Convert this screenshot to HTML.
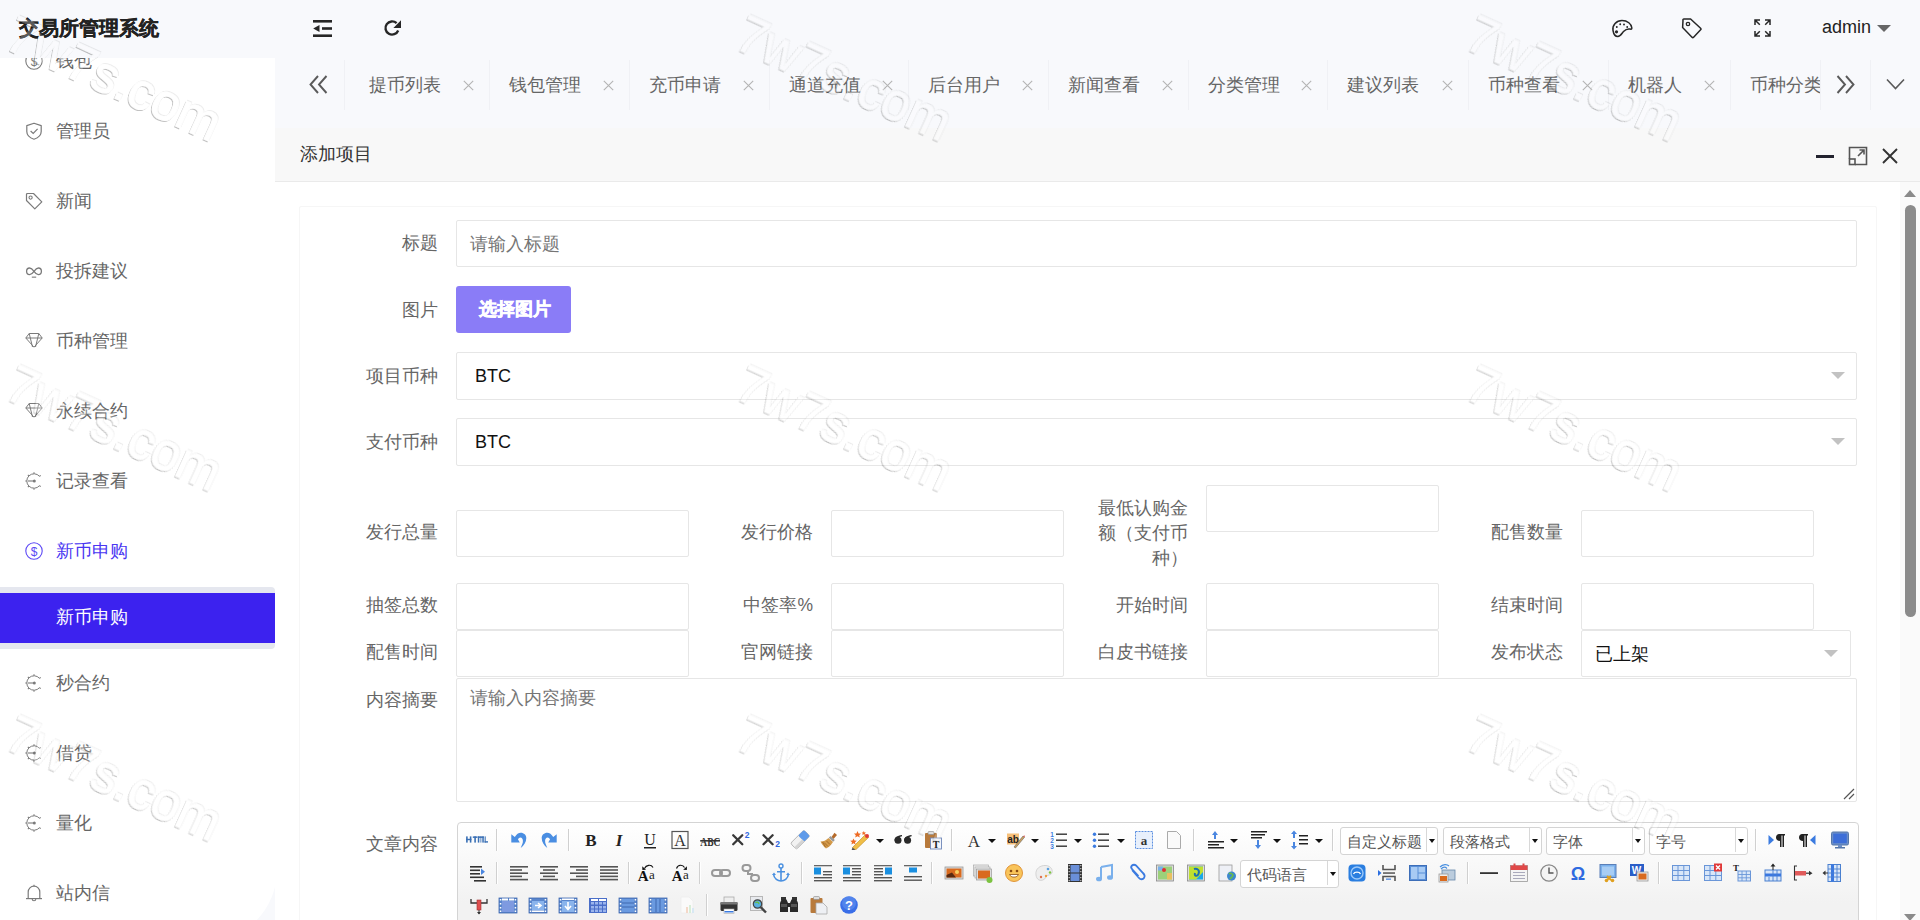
<!DOCTYPE html>
<html><head><meta charset="utf-8">
<style>
*{box-sizing:border-box;margin:0;padding:0}
html,body{width:1920px;height:920px;overflow:hidden;background:#fff;font-family:"Liberation Sans",sans-serif;color:#333}
.a{position:absolute}
#hdr{left:0;top:0;width:1920px;height:58px;background:#f8f9fc}
#logo{left:19px;top:14px;font-size:20px;font-weight:bold;color:#222;-webkit-text-stroke:0.3px #222;line-height:28px;white-space:nowrap}
#side{left:0;top:58px;width:275px;height:862px;background:#fff;overflow:hidden}
.mt{left:56px;font-size:17.5px;color:#666;line-height:28px;white-space:nowrap}
.mi{position:absolute;left:0;width:275px;height:40px;font-size:17.5px;color:#666;line-height:40px}
.mi span{position:absolute;left:57px;top:0;white-space:nowrap}
.mi svg{position:absolute;left:25px;top:11px}
#tabs{left:275px;top:58px;width:1645px;height:70px;background:#f8f9fc}
.tab{position:absolute;top:3px;height:50px;font-size:17.5px;color:#666;line-height:50px;white-space:nowrap}
.sep{position:absolute;top:3px;width:1px;height:50px;background:#eceef3}
#mhdr{left:275px;top:128px;width:1645px;height:54px;background:#f8f8f8;border-bottom:1px solid #eaeaea}
#mtitle{left:300px;top:140px;font-size:17.5px;color:#333;line-height:28px}
#content{left:275px;top:182px;width:1645px;height:738px;background:#fff}
#card{left:299px;top:206px;width:1578px;height:760px;border:1px solid #f6f6f6;border-radius:2px}
#sb{left:1900px;top:182px;width:20px;height:738px;background:#fafafa}
.lbl{position:absolute;font-size:17.5px;color:#666;line-height:25px;text-align:right;white-space:nowrap}
.inp{position:absolute;border:1px solid #e6e6e6;border-radius:2px;background:#fff}
.ph{position:absolute;font-size:17.5px;color:#757575;line-height:25px;white-space:nowrap}
.tabt{font-size:17.5px;color:#666;line-height:25px;white-space:nowrap}
.wm{position:absolute;font-family:"Liberation Sans",sans-serif;font-size:48px;font-weight:bold;line-height:54px;color:#fff;transform-origin:0 0;transform:rotate(25deg);white-space:nowrap;text-shadow:-1px 1px 1.5px rgba(0,0,0,.5);opacity:.45;pointer-events:none}
.caret{position:absolute;width:0;height:0;border-left:7px solid transparent;border-right:7px solid transparent;border-top:7px solid #c2c2c2}
</style></head><body>
<div id="side" class="a"></div>
<svg class="a" style="left:25px;top:52px" width="18" height="18" viewBox="0 0 18 18"><circle cx="9" cy="9" r="8.2" fill="none" stroke="#7a7a7a" stroke-width="1.1"/><text x="9" y="13.5" font-size="12" text-anchor="middle" fill="#7a7a7a" font-family="Liberation Sans">$</text></svg>
<div class="mt a" style="top:47px;">钱包</div>
<svg class="a" style="left:25px;top:122px" width="18" height="18" viewBox="0 0 18 18"><path d="M9 1.2 L16.2 3.6 V9.5 C16.2 13.6 12.8 16 9 17.2 C5.2 16 1.8 13.6 1.8 9.5 V3.6 Z" fill="none" stroke="#7a7a7a" stroke-width="1.2" stroke-linejoin="round"/><path d="M5.6 9 L8.2 11.4 L12.6 6.8" fill="none" stroke="#7a7a7a" stroke-width="1.2"/></svg>
<div class="mt a" style="top:117px;">管理员</div>
<svg class="a" style="left:25px;top:192px" width="18" height="18" viewBox="0 0 18 18"><path d="M1.5 2.5 Q1.5 1.5 2.5 1.5 H8.5 L16.8 9.8 L9.8 16.8 L1.5 8.5 Z" fill="none" stroke="#7a7a7a" stroke-width="1.2" stroke-linejoin="round"/><circle cx="5.6" cy="5.6" r="1.6" fill="none" stroke="#7a7a7a" stroke-width="1.1"/></svg>
<div class="mt a" style="top:187px;">新闻</div>
<svg class="a" style="left:25px;top:262px" width="18" height="18" viewBox="0 0 18 18"><path d="M9 9.3 C7.6 7.3 6.3 6 4.6 6 C2.9 6 1.6 7.4 1.6 9.3 C1.6 11.2 2.9 12.6 4.6 12.6 C6.3 12.6 7.6 11.3 9 9.3 C10.4 7.3 11.7 6 13.4 6 C15.1 6 16.4 7.4 16.4 9.3 C16.4 11.2 15.1 12.6 13.4 12.6 C11.7 12.6 10.4 11.3 9 9.3 Z" fill="none" stroke="#7a7a7a" stroke-width="1.3"/><rect x="6.8" y="14.6" width="4.4" height="1.1" fill="#7a7a7a"/></svg>
<div class="mt a" style="top:257px;">投拆建议</div>
<svg class="a" style="left:25px;top:332px" width="18" height="18" viewBox="0 0 18 18"><path d="M4.2 1.5 H13.8 L17.2 6 L9 15.2 L0.8 6 Z M0.8 6 H17.2 M4.2 1.5 L7.5 15 M13.8 1.5 L10.5 15" fill="none" stroke="#7a7a7a" stroke-width="1" stroke-linejoin="round"/></svg>
<div class="mt a" style="top:327px;">币种管理</div>
<svg class="a" style="left:25px;top:402px" width="18" height="18" viewBox="0 0 18 18"><path d="M4.2 1.5 H13.8 L17.2 6 L9 15.2 L0.8 6 Z M0.8 6 H17.2 M4.2 1.5 L7.5 15 M13.8 1.5 L10.5 15" fill="none" stroke="#7a7a7a" stroke-width="1" stroke-linejoin="round"/></svg>
<div class="mt a" style="top:397px;">永续合约</div>
<svg class="a" style="left:25px;top:472px" width="18" height="18" viewBox="0 0 18 18"><path d="M14.52 4.37 A7.2 7.2 0 1 0 14.52 13.63" fill="none" stroke="#7a7a7a" stroke-width="1"/><path d="M14.52 4.37 L15.66 3.41 M9.00 1.80 L9.00 0.30 M3.91 3.91 L2.85 2.85 M1.80 9.00 L0.30 9.00 M3.91 14.09 L2.85 15.15 M9.00 16.20 L9.00 17.70 M14.52 13.63 L15.66 14.59 " stroke="#7a7a7a" stroke-width="1.1"/><line x1="3" y1="9" x2="8.5" y2="9" stroke="#7a7a7a" stroke-width="1.1"/><circle cx="9.3" cy="9" r="1.5" fill="#7a7a7a"/></svg>
<div class="mt a" style="top:467px;">记录查看</div>
<svg class="a" style="left:25px;top:542px" width="18" height="18" viewBox="0 0 18 18"><circle cx="9" cy="9" r="8.2" fill="none" stroke="#5b47f5" stroke-width="1.1"/><text x="9" y="13.5" font-size="12" text-anchor="middle" fill="#5b47f5" font-family="Liberation Sans">$</text></svg>
<div class="mt a" style="top:537px;color:#4a36f2;">新币申购</div>
<svg class="a" style="left:25px;top:674px" width="18" height="18" viewBox="0 0 18 18"><path d="M14.52 4.37 A7.2 7.2 0 1 0 14.52 13.63" fill="none" stroke="#7a7a7a" stroke-width="1"/><path d="M14.52 4.37 L15.66 3.41 M9.00 1.80 L9.00 0.30 M3.91 3.91 L2.85 2.85 M1.80 9.00 L0.30 9.00 M3.91 14.09 L2.85 15.15 M9.00 16.20 L9.00 17.70 M14.52 13.63 L15.66 14.59 " stroke="#7a7a7a" stroke-width="1.1"/><line x1="3" y1="9" x2="8.5" y2="9" stroke="#7a7a7a" stroke-width="1.1"/><circle cx="9.3" cy="9" r="1.5" fill="#7a7a7a"/></svg>
<div class="mt a" style="top:669px;">秒合约</div>
<svg class="a" style="left:25px;top:744px" width="18" height="18" viewBox="0 0 18 18"><path d="M14.52 4.37 A7.2 7.2 0 1 0 14.52 13.63" fill="none" stroke="#7a7a7a" stroke-width="1"/><path d="M14.52 4.37 L15.66 3.41 M9.00 1.80 L9.00 0.30 M3.91 3.91 L2.85 2.85 M1.80 9.00 L0.30 9.00 M3.91 14.09 L2.85 15.15 M9.00 16.20 L9.00 17.70 M14.52 13.63 L15.66 14.59 " stroke="#7a7a7a" stroke-width="1.1"/><line x1="3" y1="9" x2="8.5" y2="9" stroke="#7a7a7a" stroke-width="1.1"/><circle cx="9.3" cy="9" r="1.5" fill="#7a7a7a"/></svg>
<div class="mt a" style="top:739px;">借贷</div>
<svg class="a" style="left:25px;top:814px" width="18" height="18" viewBox="0 0 18 18"><path d="M14.52 4.37 A7.2 7.2 0 1 0 14.52 13.63" fill="none" stroke="#7a7a7a" stroke-width="1"/><path d="M14.52 4.37 L15.66 3.41 M9.00 1.80 L9.00 0.30 M3.91 3.91 L2.85 2.85 M1.80 9.00 L0.30 9.00 M3.91 14.09 L2.85 15.15 M9.00 16.20 L9.00 17.70 M14.52 13.63 L15.66 14.59 " stroke="#7a7a7a" stroke-width="1.1"/><line x1="3" y1="9" x2="8.5" y2="9" stroke="#7a7a7a" stroke-width="1.1"/><circle cx="9.3" cy="9" r="1.5" fill="#7a7a7a"/></svg>
<div class="mt a" style="top:809px;">量化</div>
<svg class="a" style="left:25px;top:884px" width="18" height="18" viewBox="0 0 18 18"><path d="M3.2 14.2 V8 C3.2 4.6 5.8 2.2 9 2.2 C12.2 2.2 14.8 4.6 14.8 8 V14.2" fill="none" stroke="#7a7a7a" stroke-width="1.2"/><line x1="1" y1="14.6" x2="17" y2="14.6" stroke="#7a7a7a" stroke-width="1.2"/><path d="M7.2 15 A1.8 1.8 0 0 0 10.8 15" fill="none" stroke="#7a7a7a" stroke-width="1.1"/><line x1="9" y1="0.8" x2="9" y2="2.2" stroke="#7a7a7a" stroke-width="1.1"/></svg>
<div class="mt a" style="top:879px;">站内信</div>
<div class="a" style="left:0;top:587px;width:275px;height:62px;background:#e5e7ef;border-radius:0 4px 4px 0"></div>
<div class="a" style="left:0;top:593px;width:275px;height:50px;background:#3c22ef"></div>
<div class="mt a" style="top:603px;color:#fff">新币申购</div>
<div id="sbcorner" class="a" style="left:235px;top:870px;width:40px;height:50px;overflow:hidden;background:#f8f9fc"><div style="position:absolute;left:-102px;top:-72px;width:144px;height:144px;border-radius:50%;background:#fff"></div></div>
<div id="hdr" class="a"></div>
<div id="logo" class="a">交易所管理系统</div>
<div id="tabs" class="a"></div>
<div id="mhdr" class="a"></div>
<div id="mtitle" class="a">添加项目</div>
<div id="content" class="a"></div>
<div id="card" class="a"></div>
<div id="sb" class="a"></div>
<!--FORM-->
<div class="lbl" style="right:1482.0px;top:231.0px">标题</div>
<div class="inp" style="left:456.0px;top:220.0px;width:1401.0px;height:47.0px"></div>
<div class="ph" style="left:470px;top:232px">请输入标题</div>
<div class="lbl" style="right:1482.0px;top:298.0px">图片</div>
<div class="a" style="left:456px;top:286px;width:115px;height:47px;background:#8a7cf7;border-radius:3px"></div>
<div class="a" style="left:479px;top:297px;font-size:17.5px;line-height:25px;color:#fff;font-weight:bold;-webkit-text-stroke:0.6px #fff">选择图片</div>
<div class="lbl" style="right:1482.0px;top:364.0px">项目币种</div>
<div class="inp" style="left:456.0px;top:352.0px;width:1401.0px;height:48.0px"></div>
<div class="a" style="left:475px;top:364px;font-size:18px;line-height:25px;color:#111">BTC</div>
<div class="caret" style="left:1831.0px;top:372.0px"></div>
<div class="lbl" style="right:1482.0px;top:430.0px">支付币种</div>
<div class="inp" style="left:456.0px;top:418.0px;width:1401.0px;height:48.0px"></div>
<div class="a" style="left:475px;top:430px;font-size:18px;line-height:25px;color:#111">BTC</div>
<div class="caret" style="left:1831.0px;top:438.0px"></div>
<div class="lbl" style="right:1482.0px;top:520.0px">发行总量</div>
<div class="inp" style="left:456.0px;top:510.0px;width:233.0px;height:47.0px"></div>
<div class="lbl" style="right:1107.0px;top:520.0px">发行价格</div>
<div class="inp" style="left:831.0px;top:510.0px;width:233.0px;height:47.0px"></div>
<div class="lbl" style="right:732px;top:496px;line-height:25px">最低认购金<br>额（支付币<br>种）</div>
<div class="inp" style="left:1206.0px;top:485.0px;width:233.0px;height:47.0px"></div>
<div class="lbl" style="right:357.0px;top:520.0px">配售数量</div>
<div class="inp" style="left:1581.0px;top:510.0px;width:233.0px;height:47.0px"></div>
<div class="lbl" style="right:1482.0px;top:593.0px">抽签总数</div>
<div class="inp" style="left:456.0px;top:582.5px;width:233.0px;height:47.0px"></div>
<div class="lbl" style="right:1107.0px;top:593.0px">中签率%</div>
<div class="inp" style="left:831.0px;top:582.5px;width:233.0px;height:47.0px"></div>
<div class="lbl" style="right:732.0px;top:593.0px">开始时间</div>
<div class="inp" style="left:1206.0px;top:582.5px;width:233.0px;height:47.0px"></div>
<div class="lbl" style="right:357.0px;top:593.0px">结束时间</div>
<div class="inp" style="left:1581.0px;top:582.5px;width:233.0px;height:47.0px"></div>
<div class="lbl" style="right:1482.0px;top:640.0px">配售时间</div>
<div class="inp" style="left:456.0px;top:630.0px;width:233.0px;height:47.0px"></div>
<div class="lbl" style="right:1107.0px;top:640.0px">官网链接</div>
<div class="inp" style="left:831.0px;top:630.0px;width:233.0px;height:47.0px"></div>
<div class="lbl" style="right:732.0px;top:640.0px">白皮书链接</div>
<div class="inp" style="left:1206.0px;top:630.0px;width:233.0px;height:47.0px"></div>
<div class="lbl" style="right:357.0px;top:640.0px">发布状态</div>
<div class="inp" style="left:1581.0px;top:630.0px;width:270.0px;height:47.0px"></div>
<div class="a" style="left:1595px;top:642px;font-size:17.5px;line-height:25px;color:#111">已上架</div>
<div class="caret" style="left:1824.0px;top:650.0px"></div>
<div class="lbl" style="right:1482.0px;top:688.0px">内容摘要</div>
<div class="inp" style="left:456.0px;top:677.5px;width:1401.0px;height:124.0px"></div>
<div class="ph" style="left:470px;top:686px">请输入内容摘要</div>
<svg class="a" style="left:1843px;top:788px" width="12" height="12" viewBox="0 0 12 12"><path d="M1 11 L11 1 M6 11 L11 6" stroke="#555" stroke-width="1.2"/></svg>
<div class="lbl" style="right:1482.0px;top:831.5px">文章内容</div>
<!--/FORM-->
<!--TB-->
<div class="a" style="left:456.5px;top:821.5px;width:1402px;height:120px;border:1px solid #d4d4d4;border-radius:4px;background:linear-gradient(#fff,#f2f2f2 80px)"></div>
<svg class="a" style="left:466.0px;top:830.3px" width="22" height="20" viewBox="0 0 22 20"><g fill="#3a70b5"><rect x="0.1" y="6.4" width="1.6" height="6.2"/><rect x="3.8" y="6.4" width="1.6" height="6.2"/><rect x="0.1" y="8.8" width="5.3" height="1.4"/><rect x="6.8" y="6.4" width="4.6" height="1.5"/><rect x="8.3" y="6.4" width="1.6" height="6.2"/><rect x="11.8" y="6.4" width="6" height="1.5"/><rect x="11.8" y="6.4" width="1.5" height="6.2"/><rect x="14.1" y="6.4" width="1.4" height="6.2" opacity=".6"/><rect x="16.3" y="6.4" width="1.5" height="6.2"/><rect x="18.5" y="6.4" width="1.5" height="6.2" opacity=".7"/><rect x="18.5" y="11.2" width="3.5" height="1.4"/></g></svg>
<div class="a" style="left:496.1px;top:829.3px;width:1px;height:22px;background:#d0d0d0;box-shadow:1px 0 0 #fff"></div>
<svg class="a" style="left:508.6px;top:830.3px" width="20" height="20" viewBox="0 0 20 20"><path d="M2.3 4.3 L5.8 7.1 C7.5 4.2 9.5 2.7 11.7 2.7 C15 2.7 17.3 5 17.3 8 C17.3 12 15 15.5 11.7 18 C13 15 14 13 13.9 10.8 C13.9 8.8 12.8 7.4 11.4 7.4 C10.4 7.4 9.5 8.3 8.9 9.3 L10.8 12.4 L2.3 12.4 Z" fill="#4a8ee2"/></svg>
<svg class="a" style="left:538.8px;top:830.3px" width="20" height="20" viewBox="0 0 20 20"><g transform="translate(20,0) scale(-1,1)"><path d="M2.3 4.3 L5.8 7.1 C7.5 4.2 9.5 2.7 11.7 2.7 C15 2.7 17.3 5 17.3 8 C17.3 12 15 15.5 11.7 18 C13 15 14 13 13.9 10.8 C13.9 8.8 12.8 7.4 11.4 7.4 C10.4 7.4 9.5 8.3 8.9 9.3 L10.8 12.4 L2.3 12.4 Z" fill="#4a8ee2"/></g></svg>
<div class="a" style="left:567.9px;top:829.3px;width:1px;height:22px;background:#d0d0d0;box-shadow:1px 0 0 #fff"></div>
<svg class="a" style="left:580.7px;top:830.3px" width="20" height="20" viewBox="0 0 20 20"><text x="10" y="16" font-size="17" font-weight="bold" fill="#222" text-anchor="middle" font-family="Liberation Serif">B</text></svg>
<svg class="a" style="left:609.2px;top:830.3px" width="20" height="20" viewBox="0 0 20 20"><text x="10" y="16" font-size="17" font-weight="bold" font-style="italic" fill="#222" text-anchor="middle" font-family="Liberation Serif">I</text></svg>
<svg class="a" style="left:639.6px;top:830.3px" width="20" height="20" viewBox="0 0 20 20"><text x="10" y="15" font-size="16" fill="#222" text-anchor="middle" font-family="Liberation Serif">U</text><rect x="4" y="17" width="12" height="1.5" fill="#222"/></svg>
<svg class="a" style="left:669.7px;top:830.3px" width="20" height="20" viewBox="0 0 20 20"><rect x="2" y="1.5" width="16" height="17" fill="none" stroke="#555" stroke-width="1.2"/><text x="10" y="16" font-size="16" fill="#333" text-anchor="middle" font-family="Liberation Serif">A</text></svg>
<svg class="a" style="left:699.6px;top:830.3px" width="20" height="20" viewBox="0 0 20 20"><text x="10.3" y="15.5" font-size="13" font-weight="bold" fill="#333" text-anchor="middle" font-family="Liberation Serif" textLength="20" lengthAdjust="spacingAndGlyphs">ABC</text><rect x="0.2" y="10" width="20" height="1.6" fill="#333"/></svg>
<svg class="a" style="left:730.0px;top:830.3px" width="20" height="20" viewBox="0 0 20 20"><path d="M3.2 5.2 L12.3 14.3 M12.3 5.2 L3.2 14.3" stroke="#383838" stroke-width="2.3" stroke-linecap="round"/><text x="17.2" y="7.8" font-size="8.5" font-weight="bold" fill="#2f66e0" text-anchor="middle" font-family="Liberation Sans">2</text></svg>
<svg class="a" style="left:759.8px;top:830.3px" width="20" height="20" viewBox="0 0 20 20"><path d="M3.5 5.2 L12.6 14.3 M12.6 5.2 L3.5 14.3" stroke="#383838" stroke-width="2.3" stroke-linecap="round"/><text x="17.5" y="16.6" font-size="8.5" font-weight="bold" fill="#2f66e0" text-anchor="middle" font-family="Liberation Sans">2</text></svg>
<svg class="a" style="left:789.6px;top:830.3px" width="20" height="20" viewBox="0 0 20 20"><g transform="rotate(-45 10 9.5)"><rect x="0.5" y="5.5" width="19" height="8.5" rx="2" fill="#f2f2f2" stroke="#aaa" stroke-width="0.8"/><rect x="11.5" y="5.5" width="8" height="8.5" rx="1.5" fill="#5f9bea"/><rect x="0.5" y="11" width="11" height="3" fill="#d4d4d4"/></g></svg>
<svg class="a" style="left:819.4px;top:830.3px" width="20" height="20" viewBox="0 0 20 20"><path d="M15.5 2.8 L18 5 L14.5 9 L12.5 7 Z" fill="#b56a2a"/><path d="M11.5 6 L15.8 10 L14.2 11.8 L9.8 7.8 Z" fill="#999"/><path d="M9.5 8 L14 12 C12 15.5 9.5 17.5 7 18.5 C5 17 3 14.5 1.5 11.5 C4.5 11.5 7 10.5 9.5 8 Z" fill="#d39a4a"/><path d="M5 12.5 L9 16.5 M7.5 11 L11 14.5 M3.5 12 L6.5 17" stroke="#9a6020" stroke-width="0.8"/></svg>
<svg class="a" style="left:849.8px;top:830.3px" width="20" height="20" viewBox="0 0 20 20"><path d="M2.5 17.5 L15.5 4.5 L18.5 7.5 L5.5 20 Z" fill="#f0be48" stroke="#c08a20" stroke-width="0.6"/><circle cx="17" cy="6" r="2" fill="#e03838"/><path d="M2.5 17.5 L5.5 20 L1.5 20.5 Z" fill="#555"/><path d="M7.5 1 L8.6 3.4 L11 3.6 L9.2 5.2 L9.8 7.6 L7.5 6.3 L5.2 7.6 L5.8 5.2 L4 3.6 L6.4 3.4 Z" fill="#ee6a22"/><path d="M13.8 1 L14.5 2.5 L16 2.6 L14.9 3.6 L15.2 5.1 L13.8 4.3 L12.4 5.1 L12.7 3.6 L11.6 2.6 L13.1 2.5 Z" fill="#ee6a22"/><path d="M3.5 8.5 L4.5 10.6 L6.8 10.8 L5 12.3 L5.6 14.5 L3.5 13.3 L1.4 14.5 L2 12.3 L0.2 10.8 L2.5 10.6 Z" fill="#ee6a22"/></svg>
<div class="a" style="left:875.5px;top:838.8px;width:0;height:0;border-left:4px solid transparent;border-right:4px solid transparent;border-top:4.5px solid #111"></div>
<svg class="a" style="left:892.6px;top:830.3px" width="20" height="20" viewBox="0 0 20 20"><g fill="#2a2a2a"><circle cx="5" cy="10.2" r="3.5"/><path d="M1.5 10.5 C1.5 7.5 4 5.5 9 5 L9 6.2 C6.5 6.8 5 8 4.8 10 Z"/><circle cx="14.6" cy="10.2" r="3.5"/><path d="M11.1 10.5 C11.1 7.5 13.6 5.5 18.6 5 L18.6 6.2 C16.1 6.8 14.6 8 14.4 10 Z"/></g></svg>
<svg class="a" style="left:922.9px;top:830.3px" width="20" height="20" viewBox="0 0 20 20"><rect x="2" y="3" width="12" height="15" rx="1" fill="#b87a3c"/><rect x="5" y="1.5" width="6" height="3" rx="1" fill="#ddd" stroke="#888" stroke-width="0.6"/><rect x="7.5" y="8" width="11" height="11" fill="#f4f6fb" stroke="#6e86b8" stroke-width="0.9"/><text x="13" y="17.5" font-size="10" font-weight="bold" fill="#222" text-anchor="middle" font-family="Liberation Serif">T</text></svg>
<div class="a" style="left:950.9px;top:829.3px;width:1px;height:22px;background:#d0d0d0;box-shadow:1px 0 0 #fff"></div>
<svg class="a" style="left:963.9px;top:830.3px" width="20" height="20" viewBox="0 0 20 20"><text x="10" y="16.5" font-size="17" fill="#333" text-anchor="middle" font-family="Liberation Serif">A</text></svg>
<div class="a" style="left:988.3px;top:838.8px;width:0;height:0;border-left:4px solid transparent;border-right:4px solid transparent;border-top:4.5px solid #111"></div>
<svg class="a" style="left:1005.9px;top:830.3px" width="20" height="20" viewBox="0 0 20 20"><rect x="1" y="3.5" width="12" height="11" fill="#f6c07a"/><text x="7" y="13" font-size="10" fill="#222" text-anchor="middle" font-family="Liberation Sans" font-weight="bold">ab</text><path d="M8 17 L17 6 L18.5 7.3 L9.5 18 Z" fill="#caa060" stroke="#555" stroke-width="0.5"/><path d="M17 6 L18.5 7.3 L19 5.5 Z" fill="#e05050"/></svg>
<div class="a" style="left:1031.4px;top:838.8px;width:0;height:0;border-left:4px solid transparent;border-right:4px solid transparent;border-top:4.5px solid #111"></div>
<svg class="a" style="left:1049.2px;top:830.3px" width="20" height="20" viewBox="0 0 20 20"><text x="3" y="7" font-size="6.5" font-weight="bold" fill="#3b7be0" text-anchor="middle" font-family="Liberation Sans">1</text><text x="3" y="13" font-size="6.5" font-weight="bold" fill="#3b7be0" text-anchor="middle" font-family="Liberation Sans">2</text><text x="3" y="19" font-size="6.5" font-weight="bold" fill="#3b7be0" text-anchor="middle" font-family="Liberation Sans">3</text><rect x="7" y="3.5" width="11" height="1.4" fill="#333"/><rect x="7" y="9.5" width="11" height="1.4" fill="#333"/><rect x="7" y="15.5" width="11" height="1.4" fill="#333"/></svg>
<div class="a" style="left:1073.7px;top:838.8px;width:0;height:0;border-left:4px solid transparent;border-right:4px solid transparent;border-top:4.5px solid #111"></div>
<svg class="a" style="left:1091.2px;top:830.3px" width="20" height="20" viewBox="0 0 20 20"><circle cx="3.5" cy="4.2" r="1.7" fill="#3b7be0"/><circle cx="3.5" cy="10.2" r="1.7" fill="#3b7be0"/><circle cx="3.5" cy="16.2" r="1.7" fill="#3b7be0"/><rect x="7" y="3.5" width="11" height="1.4" fill="#333"/><rect x="7" y="9.5" width="11" height="1.4" fill="#333"/><rect x="7" y="15.5" width="11" height="1.4" fill="#333"/></svg>
<div class="a" style="left:1116.8px;top:838.8px;width:0;height:0;border-left:4px solid transparent;border-right:4px solid transparent;border-top:4.5px solid #111"></div>
<svg class="a" style="left:1133.8px;top:830.3px" width="20" height="20" viewBox="0 0 20 20"><rect x="1.5" y="1.5" width="17" height="17" fill="#e8f0fc" stroke="#5a8fe0" stroke-width="1" stroke-dasharray="2 1"/><text x="10" y="15" font-size="13" font-weight="bold" fill="#333" text-anchor="middle" font-family="Liberation Serif">a</text></svg>
<svg class="a" style="left:1163.6px;top:830.3px" width="20" height="20" viewBox="0 0 20 20"><path d="M3.5 1.5 H12.5 L16.5 5.5 V18.5 H3.5 Z" fill="#fafafa" stroke="#aaa" stroke-width="1"/></svg>
<div class="a" style="left:1192.9px;top:829.3px;width:1px;height:22px;background:#d0d0d0;box-shadow:1px 0 0 #fff"></div>
<svg class="a" style="left:1205.9px;top:830.3px" width="20" height="20" viewBox="0 0 20 20"><path d="M9 1 L12 5 H10 V9 H8 V5 H6 Z" fill="#4a86e0"/><rect x="2" y="11" width="16" height="1.5" fill="#222"/><rect x="2" y="14" width="11" height="1.5" fill="#222"/><rect x="2" y="17" width="16" height="1.5" fill="#222"/></svg>
<div class="a" style="left:1230.0px;top:838.8px;width:0;height:0;border-left:4px solid transparent;border-right:4px solid transparent;border-top:4.5px solid #111"></div>
<svg class="a" style="left:1249.2px;top:830.3px" width="20" height="20" viewBox="0 0 20 20"><rect x="2" y="1" width="16" height="1.5" fill="#222"/><rect x="2" y="4" width="14" height="1.5" fill="#222"/><rect x="2" y="7" width="11" height="1.5" fill="#222"/><path d="M9 19 L12 15 H10 V10 H8 V15 H6 Z" fill="#4a86e0"/></svg>
<div class="a" style="left:1272.9px;top:838.8px;width:0;height:0;border-left:4px solid transparent;border-right:4px solid transparent;border-top:4.5px solid #111"></div>
<svg class="a" style="left:1290.4px;top:830.3px" width="20" height="20" viewBox="0 0 20 20"><path d="M4 0.5 L7 4 H5 V8 H3 V4 H1 Z M4 19.5 L7 16 H5 V12 H3 V16 H1 Z" fill="#4a86e0"/><rect x="9" y="5" width="9" height="1.5" fill="#222"/><rect x="9" y="9" width="9" height="1.5" fill="#222"/><rect x="9" y="13" width="9" height="1.5" fill="#222"/></svg>
<div class="a" style="left:1315.4px;top:838.8px;width:0;height:0;border-left:4px solid transparent;border-right:4px solid transparent;border-top:4.5px solid #111"></div>
<div class="a" style="left:1331.6px;top:829.3px;width:1px;height:22px;background:#d0d0d0;box-shadow:1px 0 0 #fff"></div>
<div class="a" style="left:1339.7px;top:827.4px;width:98.3px;height:27.9px;background:#fff;border:1px solid #d4d4d4;border-radius:3px"></div>
<div class="a" style="left:1425.5px;top:828.4px;width:1px;height:23.9px;background:#d8d8d8"></div>
<div class="a" style="left:1428.5px;top:839.3px;width:0;height:0;border-left:3.5px solid transparent;border-right:3.5px solid transparent;border-top:4px solid #111"></div>
<div class="a" style="left:1346.7px;top:831.8px;font-size:15px;line-height:20px;color:#555;white-space:nowrap">自定义标题</div>
<div class="a" style="left:1442.5px;top:827.4px;width:99.0px;height:27.9px;background:#fff;border:1px solid #d4d4d4;border-radius:3px"></div>
<div class="a" style="left:1529.0px;top:828.4px;width:1px;height:23.9px;background:#d8d8d8"></div>
<div class="a" style="left:1532.0px;top:839.3px;width:0;height:0;border-left:3.5px solid transparent;border-right:3.5px solid transparent;border-top:4px solid #111"></div>
<div class="a" style="left:1449.5px;top:831.8px;font-size:15px;line-height:20px;color:#555;white-space:nowrap">段落格式</div>
<div class="a" style="left:1545.5px;top:827.4px;width:99.2px;height:27.9px;background:#fff;border:1px solid #d4d4d4;border-radius:3px"></div>
<div class="a" style="left:1632.2px;top:828.4px;width:1px;height:23.9px;background:#d8d8d8"></div>
<div class="a" style="left:1635.2px;top:839.3px;width:0;height:0;border-left:3.5px solid transparent;border-right:3.5px solid transparent;border-top:4px solid #111"></div>
<div class="a" style="left:1552.5px;top:831.8px;font-size:15px;line-height:20px;color:#555;white-space:nowrap">字体</div>
<div class="a" style="left:1648.5px;top:827.4px;width:99.2px;height:27.9px;background:#fff;border:1px solid #d4d4d4;border-radius:3px"></div>
<div class="a" style="left:1735.2px;top:828.4px;width:1px;height:23.9px;background:#d8d8d8"></div>
<div class="a" style="left:1738.2px;top:839.3px;width:0;height:0;border-left:3.5px solid transparent;border-right:3.5px solid transparent;border-top:4px solid #111"></div>
<div class="a" style="left:1655.5px;top:831.8px;font-size:15px;line-height:20px;color:#555;white-space:nowrap">字号</div>
<div class="a" style="left:1754.5px;top:829.3px;width:1px;height:22px;background:#d0d0d0;box-shadow:1px 0 0 #fff"></div>
<svg class="a" style="left:1766.7px;top:830.3px" width="20" height="20" viewBox="0 0 20 20"><path d="M1.5 5 L7 10 L1.5 15 Z" fill="#3b7be0"/><path d="M12 4 H18 V5.5 H17 V17 H15.5 V5.5 H14.5 V17 H13 V11 C10.5 11 9 9.5 9 7.5 C9 5.5 10.5 4 12 4 Z" fill="#222"/></svg>
<svg class="a" style="left:1796.5px;top:830.3px" width="20" height="20" viewBox="0 0 20 20"><path d="M18.5 5 L13 10 L18.5 15 Z" fill="#3b7be0"/><path d="M5 4 H11 V5.5 H10 V17 H8.5 V5.5 H7.5 V17 H6 V11 C3.5 11 2 9.5 2 7.5 C2 5.5 3.5 4 5 4 Z" fill="#222"/></svg>
<svg class="a" style="left:1830.4px;top:830.3px" width="20" height="20" viewBox="0 0 20 20"><rect x="1.5" y="2" width="17" height="13" rx="1.5" fill="#6c8fc8" stroke="#5577aa" stroke-width="1"/><rect x="3.2" y="3.6" width="13.6" height="9.6" fill="#3d6ed8"/><rect x="8" y="15" width="4" height="2" fill="#6c8fc8"/><rect x="5" y="17" width="10" height="1.5" fill="#5577aa"/></svg>
<svg class="a" style="left:467.9px;top:862.8px" width="20" height="20" viewBox="0 0 20 20"><rect x="2" y="3" width="12" height="1.6" fill="#333"/><rect x="2" y="6.5" width="10" height="1.6" fill="#333"/><rect x="2" y="10" width="10" height="1.6" fill="#333"/><rect x="2" y="13.5" width="14" height="1.6" fill="#333"/><rect x="6" y="17" width="12" height="1.6" fill="#333"/><path d="M13 5.5 L17 8.8 L13 12 Z" fill="#4a86e0"/></svg>
<div class="a" style="left:496.1px;top:861.8px;width:1px;height:22px;background:#d0d0d0;box-shadow:1px 0 0 #fff"></div>
<svg class="a" style="left:508.6px;top:862.8px" width="20" height="20" viewBox="0 0 20 20"><rect x="1.0" y="3.0" width="18.0" height="1.6" fill="#555"/><rect x="1.0" y="6.2" width="12.0" height="1.6" fill="#555"/><rect x="1.0" y="9.4" width="18.0" height="1.6" fill="#555"/><rect x="1.0" y="12.6" width="12.0" height="1.6" fill="#555"/><rect x="1.0" y="15.8" width="18.0" height="1.6" fill="#555"/></svg>
<svg class="a" style="left:538.9px;top:862.8px" width="20" height="20" viewBox="0 0 20 20"><rect x="1.0" y="3.0" width="18.0" height="1.6" fill="#555"/><rect x="4.0" y="6.2" width="12.0" height="1.6" fill="#555"/><rect x="1.0" y="9.4" width="18.0" height="1.6" fill="#555"/><rect x="4.0" y="12.6" width="12.0" height="1.6" fill="#555"/><rect x="1.0" y="15.8" width="18.0" height="1.6" fill="#555"/></svg>
<svg class="a" style="left:568.7px;top:862.8px" width="20" height="20" viewBox="0 0 20 20"><rect x="1.0" y="3.0" width="18.0" height="1.6" fill="#555"/><rect x="7.0" y="6.2" width="12.0" height="1.6" fill="#555"/><rect x="1.0" y="9.4" width="18.0" height="1.6" fill="#555"/><rect x="7.0" y="12.6" width="12.0" height="1.6" fill="#555"/><rect x="1.0" y="15.8" width="18.0" height="1.6" fill="#555"/></svg>
<svg class="a" style="left:598.5px;top:862.8px" width="20" height="20" viewBox="0 0 20 20"><rect x="1.0" y="3.0" width="18.0" height="1.6" fill="#555"/><rect x="1.0" y="6.2" width="18.0" height="1.6" fill="#555"/><rect x="1.0" y="9.4" width="18.0" height="1.6" fill="#555"/><rect x="1.0" y="12.6" width="18.0" height="1.6" fill="#555"/><rect x="1.0" y="15.8" width="18.0" height="1.6" fill="#555"/></svg>
<div class="a" style="left:627.5px;top:861.8px;width:1px;height:22px;background:#d0d0d0;box-shadow:1px 0 0 #fff"></div>
<svg class="a" style="left:635.7px;top:862.8px" width="20" height="20" viewBox="0 0 20 20"><text x="7.2" y="18.3" font-size="15" fill="#111" text-anchor="middle" font-weight="bold" font-family="Liberation Serif">A</text><text x="16" y="15.9" font-size="13" fill="#222" text-anchor="middle" font-family="Liberation Serif">a</text><path d="M8.5 5.5 C10 2 15 1 17 4.5" fill="none" stroke="#111" stroke-width="1.1"/><path d="M6.2 3.2 L6.4 7 L10 6.8 Z" fill="#111"/></svg>
<svg class="a" style="left:670.4px;top:862.8px" width="20" height="20" viewBox="0 0 20 20"><text x="7.2" y="18.3" font-size="15" fill="#111" text-anchor="middle" font-weight="bold" font-family="Liberation Serif">A</text><text x="16" y="15.9" font-size="13" fill="#222" text-anchor="middle" font-family="Liberation Serif">a</text><path d="M6.5 5.5 C8 1 13 1.5 14.5 4.5" fill="none" stroke="#111" stroke-width="1.1"/><path d="M17 3.2 L16.8 7 L13.2 6.8 Z" fill="#111"/></svg>
<div class="a" style="left:698.8px;top:861.8px;width:1px;height:22px;background:#d0d0d0;box-shadow:1px 0 0 #fff"></div>
<svg class="a" style="left:711.0px;top:862.8px" width="20" height="20" viewBox="0 0 20 20"><rect x="1" y="7" width="10" height="6" rx="3" fill="none" stroke="#999" stroke-width="2"/><rect x="9" y="7" width="10" height="6" rx="3" fill="none" stroke="#999" stroke-width="2"/></svg>
<svg class="a" style="left:741.4px;top:862.8px" width="20" height="20" viewBox="0 0 20 20"><rect x="1.5" y="2" width="8" height="6" rx="3" fill="none" stroke="#999" stroke-width="2"/><rect x="10" y="12" width="8" height="6" rx="3" fill="none" stroke="#999" stroke-width="2"/><path d="M7 8 V11 H12" fill="none" stroke="#999" stroke-width="2"/></svg>
<svg class="a" style="left:770.6px;top:862.8px" width="20" height="20" viewBox="0 0 20 20"><circle cx="10" cy="3" r="2" fill="none" stroke="#4a90e0" stroke-width="1.4"/><rect x="9.2" y="5" width="1.6" height="13" fill="#4a90e0"/><rect x="6" y="8" width="8" height="1.5" fill="#4a90e0"/><path d="M2.5 11 C3 16 7 18 10 18 C13 18 17 16 17.5 11" fill="none" stroke="#4a90e0" stroke-width="1.6"/><path d="M1 12 L3 9.5 L5 12 Z M15 12 L17 9.5 L19 12 Z" fill="#4a90e0"/></svg>
<div class="a" style="left:800.5px;top:861.8px;width:1px;height:22px;background:#d0d0d0;box-shadow:1px 0 0 #fff"></div>
<svg class="a" style="left:812.6px;top:862.8px" width="20" height="20" viewBox="0 0 20 20"><rect x="1" y="2" width="18" height="1.3" fill="#666"/><rect x="1.0" y="4.5" width="7" height="7" fill="#1a8fe0"/><rect x="10.0" y="8.0" width="9.0" height="1.4" fill="#555"/><rect x="10.0" y="11.0" width="9.0" height="1.4" fill="#555"/><rect x="1.0" y="14.0" width="18.0" height="1.4" fill="#555"/><rect x="1.0" y="17.0" width="18.0" height="1.4" fill="#555"/></svg>
<svg class="a" style="left:841.6px;top:862.8px" width="20" height="20" viewBox="0 0 20 20"><rect x="1" y="2" width="18" height="1.3" fill="#666"/><rect x="1.0" y="4.5" width="7" height="7" fill="#1a8fe0"/><rect x="10.0" y="5.0" width="9.0" height="1.4" fill="#555"/><rect x="10.0" y="8.0" width="9.0" height="1.4" fill="#555"/><rect x="10.0" y="11.0" width="9.0" height="1.4" fill="#555"/><rect x="1.0" y="14.0" width="18.0" height="1.4" fill="#555"/><rect x="1.0" y="17.0" width="18.0" height="1.4" fill="#555"/></svg>
<svg class="a" style="left:872.8px;top:862.8px" width="20" height="20" viewBox="0 0 20 20"><rect x="1" y="2" width="18" height="1.3" fill="#666"/><rect x="12.0" y="4.5" width="7" height="7" fill="#1a8fe0"/><rect x="1.0" y="5.0" width="9.0" height="1.4" fill="#555"/><rect x="1.0" y="8.0" width="9.0" height="1.4" fill="#555"/><rect x="1.0" y="11.0" width="9.0" height="1.4" fill="#555"/><rect x="1.0" y="14.0" width="18.0" height="1.4" fill="#555"/><rect x="1.0" y="17.0" width="18.0" height="1.4" fill="#555"/></svg>
<svg class="a" style="left:902.6px;top:862.8px" width="20" height="20" viewBox="0 0 20 20"><rect x="1" y="2" width="18" height="1.3" fill="#666"/><rect x="6" y="4.5" width="8" height="5" fill="#1a8fe0"/><rect x="1" y="13" width="18" height="1.4" fill="#555"/><rect x="1" y="16.5" width="18" height="1.4" fill="#555"/></svg>
<div class="a" style="left:931.3px;top:861.8px;width:1px;height:22px;background:#d0d0d0;box-shadow:1px 0 0 #fff"></div>
<svg class="a" style="left:943.6px;top:862.8px" width="20" height="20" viewBox="0 0 20 20"><rect x="1" y="4" width="18" height="12" fill="#ddd" stroke="#999" stroke-width="0.8"/><rect x="2.5" y="5.5" width="15" height="9" fill="#d96a1e"/><circle cx="13" cy="9" r="2" fill="#f8d060"/><path d="M2.5 12 L8 9.5 L12 14.5 H2.5 Z" fill="#5a2a10"/></svg>
<svg class="a" style="left:972.8px;top:862.8px" width="20" height="20" viewBox="0 0 20 20"><rect x="0.5" y="2" width="15" height="11" fill="#eee" stroke="#aaa" stroke-width="0.7"/><rect x="2" y="4" width="15" height="11" fill="#eee" stroke="#aaa" stroke-width="0.7"/><rect x="3.5" y="6" width="15" height="11" fill="#ddd" stroke="#999" stroke-width="0.7"/><rect x="5" y="7.5" width="12" height="8" fill="#d96a1e"/><circle cx="16.5" cy="17" r="3" fill="#7cc340"/></svg>
<svg class="a" style="left:1003.7px;top:862.8px" width="20" height="20" viewBox="0 0 20 20"><circle cx="10" cy="10" r="8.5" fill="#f9c45a" stroke="#e0953a" stroke-width="1"/><circle cx="7" cy="8" r="1.3" fill="#8a4b10"/><circle cx="13" cy="8" r="1.3" fill="#8a4b10"/><path d="M5.5 11.5 C7 15 13 15 14.5 11.5 Z" fill="#fff" stroke="#8a4b10" stroke-width="0.8"/></svg>
<svg class="a" style="left:1033.5px;top:862.8px" width="20" height="20" viewBox="0 0 20 20"><path d="M2 12 C1 6 6 2 12 2.5 C17 3 19 7 18 10 C17 13 13 11 12 14 C11 17 7 18 5 17 C3 16 2.3 14 2 12 Z" fill="#eee" stroke="#ccc" stroke-width="0.8"/><circle cx="14" cy="6" r="1.3" fill="#5aa0e0"/><circle cx="16" cy="9.5" r="1.2" fill="#7cc340"/><circle cx="7" cy="14" r="1.2" fill="#e07050"/><circle cx="12" cy="13" r="1.2" fill="#f0a040"/></svg>
<svg class="a" style="left:1064.7px;top:862.8px" width="20" height="20" viewBox="0 0 20 20"><rect x="3" y="1" width="14" height="18" fill="#333"/><rect x="5.5" y="2" width="9" height="7.5" fill="#6a8fd8"/><rect x="5.5" y="10.5" width="9" height="7.5" fill="#6a8fd8"/><g fill="#ccc"><rect x="3.6" y="2" width="1.2" height="1.2"/><rect x="3.6" y="5" width="1.2" height="1.2"/><rect x="3.6" y="8" width="1.2" height="1.2"/><rect x="3.6" y="11" width="1.2" height="1.2"/><rect x="3.6" y="14" width="1.2" height="1.2"/><rect x="3.6" y="17" width="1.2" height="1.2"/><rect x="15.2" y="2" width="1.2" height="1.2"/><rect x="15.2" y="5" width="1.2" height="1.2"/><rect x="15.2" y="8" width="1.2" height="1.2"/><rect x="15.2" y="11" width="1.2" height="1.2"/><rect x="15.2" y="14" width="1.2" height="1.2"/><rect x="15.2" y="17" width="1.2" height="1.2"/></g></svg>
<svg class="a" style="left:1094.5px;top:862.8px" width="20" height="20" viewBox="0 0 20 20"><path d="M6 4 L17 2 V14 M6 4 V16" fill="none" stroke="#7ab0ec" stroke-width="2"/><ellipse cx="4" cy="16" rx="3" ry="2.3" fill="#7ab0ec"/><ellipse cx="15" cy="14.5" rx="3" ry="2.3" fill="#7ab0ec"/></svg>
<svg class="a" style="left:1126.5px;top:862.8px" width="20" height="20" viewBox="0 0 20 20"><path d="M5 7 L12 15 C13.5 16.8 16 16.5 17 15 C18 13.5 17.5 11.5 16 10 L9 2.5 C8 1.5 6 1.5 5 2.5 C4 3.5 4 5 5 6 L11.5 13" fill="none" stroke="#3b7be0" stroke-width="1.8"/></svg>
<svg class="a" style="left:1154.9px;top:862.8px" width="20" height="20" viewBox="0 0 20 20"><rect x="1.5" y="2" width="17" height="16" fill="#ddd" stroke="#888" stroke-width="0.8"/><rect x="3" y="3.5" width="14" height="13" fill="#9cd07a"/><rect x="3" y="3.5" width="5" height="4" fill="#7ab0ec"/><rect x="12" y="10" width="5" height="6.5" fill="#e8c060"/><circle cx="9" cy="7" r="2" fill="#e03030"/></svg>
<svg class="a" style="left:1185.5px;top:862.8px" width="20" height="20" viewBox="0 0 20 20"><rect x="1.5" y="2" width="17" height="16" fill="#ddd" stroke="#888" stroke-width="0.8"/><rect x="3" y="3.5" width="14" height="13" fill="#1aa8e8"/><path d="M3 3.5 H17 V9 L10 16.5 H3 Z" fill="#c0e030"/><path d="M8 6 C11 5 14 7 12.5 11 C11 14 8 13 9 10" fill="none" stroke="#1a6fb0" stroke-width="2"/></svg>
<svg class="a" style="left:1216.7px;top:862.8px" width="20" height="20" viewBox="0 0 20 20"><rect x="2" y="2" width="13" height="16" fill="#eef0f6" stroke="#999" stroke-width="0.8"/><circle cx="14.5" cy="13" r="4.5" fill="#3d88d0"/><path d="M12 11 C13 10 15 10 16 12 C15.5 14 14 15 13 16" fill="none" stroke="#6cc040" stroke-width="1.5"/></svg>
<div class="a" style="left:1240.4px;top:859.7px;width:99.1px;height:28.8px;background:#fff;border:1px solid #d4d4d4;border-radius:3px"></div>
<div class="a" style="left:1327.0px;top:860.7px;width:1px;height:24.8px;background:#d8d8d8"></div>
<div class="a" style="left:1330.0px;top:872.1px;width:0;height:0;border-left:3.5px solid transparent;border-right:3.5px solid transparent;border-top:4px solid #111"></div>
<div class="a" style="left:1247.4px;top:864.6px;font-size:15px;line-height:20px;color:#555;white-space:nowrap">代码语言</div>
<svg class="a" style="left:1346.5px;top:862.8px" width="20" height="20" viewBox="0 0 20 20"><rect x="1.5" y="1.5" width="17" height="17" rx="4" fill="#2a7ee0"/><circle cx="10" cy="10" r="6" fill="none" stroke="#9cc8f8" stroke-width="1.4"/><path d="M6.5 11 C7.5 8.5 12.5 8.5 13.5 11" fill="none" stroke="#fff" stroke-width="1.3"/></svg>
<svg class="a" style="left:1377.0px;top:862.8px" width="20" height="20" viewBox="0 0 20 20"><path d="M6 2 V6.5 H18 V2" fill="none" stroke="#555" stroke-width="1.6"/><path d="M6 18 V13.5 H18 V18" fill="none" stroke="#555" stroke-width="1.6"/><rect x="6" y="9.3" width="12" height="1.5" fill="#555"/><path d="M1 7 L4.5 10 L1 13 Z" fill="#2a6ee0"/><rect x="9" y="15.5" width="5" height="1.3" fill="#4a86e0"/></svg>
<svg class="a" style="left:1407.8px;top:862.8px" width="20" height="20" viewBox="0 0 20 20"><rect x="1.5" y="2.5" width="17" height="15" fill="#5a90d8" stroke="#3d6eb8" stroke-width="1"/><rect x="3" y="4" width="6.5" height="12" fill="#a8cbf4"/><rect x="10.5" y="4" width="6.5" height="5.5" fill="#a8cbf4"/><rect x="10.5" y="10.5" width="6.5" height="5.5" fill="#a8cbf4"/></svg>
<svg class="a" style="left:1436.8px;top:862.8px" width="20" height="20" viewBox="0 0 20 20"><path d="M3 4 C6 1 10 1 12 3 M4 6 C6 4 8.5 4 10 5.5" fill="none" stroke="#4a90e0" stroke-width="1.2"/><rect x="5" y="7" width="13" height="10" fill="#bcd" stroke="#68a" stroke-width="0.8"/><rect x="2" y="11" width="9" height="8" fill="#eee" stroke="#999" stroke-width="0.8"/><rect x="3" y="13" width="7" height="5" fill="#d96a1e"/></svg>
<div class="a" style="left:1466.7px;top:861.8px;width:1px;height:22px;background:#d0d0d0;box-shadow:1px 0 0 #fff"></div>
<svg class="a" style="left:1478.6px;top:862.8px" width="20" height="20" viewBox="0 0 20 20"><rect x="1" y="9.2" width="18" height="1.8" fill="#333"/></svg>
<svg class="a" style="left:1508.7px;top:862.8px" width="20" height="20" viewBox="0 0 20 20"><rect x="1.5" y="2.5" width="17" height="16" fill="#f4f4f4" stroke="#999" stroke-width="0.8"/><rect x="1.5" y="2.5" width="17" height="4.5" fill="#e04848"/><rect x="4.5" y="0.5" width="2" height="4" fill="#e04848"/><rect x="13.5" y="0.5" width="2" height="4" fill="#e04848"/><g fill="#aab"><rect x="4" y="9" width="12" height="1"/><rect x="4" y="12" width="12" height="1"/><rect x="4" y="15" width="12" height="1"/></g></svg>
<svg class="a" style="left:1538.5px;top:862.8px" width="20" height="20" viewBox="0 0 20 20"><circle cx="10" cy="10" r="8.2" fill="#f4f4f4" stroke="#888" stroke-width="1.2"/><path d="M10 4.5 V10 H14.5" fill="none" stroke="#555" stroke-width="1.4"/></svg>
<svg class="a" style="left:1568.3px;top:862.8px" width="20" height="20" viewBox="0 0 20 20"><text x="10" y="17" font-size="18" font-weight="bold" fill="#2f6ae0" text-anchor="middle" font-family="Liberation Sans">Ω</text></svg>
<svg class="a" style="left:1598.7px;top:862.8px" width="20" height="20" viewBox="0 0 20 20"><rect x="1" y="1.5" width="16" height="13" fill="#7ab0ec" stroke="#5a7fb8" stroke-width="1"/><rect x="3" y="3.5" width="12" height="9" fill="#a8cdf4"/><path d="M8 13 L12 17 M12 13 L8 17" stroke="#e0a020" stroke-width="2"/><circle cx="7.5" cy="17.5" r="1.8" fill="#e0a020"/><circle cx="13.5" cy="17.5" r="1.8" fill="#e0a020"/></svg>
<svg class="a" style="left:1628.5px;top:862.8px" width="20" height="20" viewBox="0 0 20 20"><rect x="1" y="1" width="14" height="12" fill="#2a5ec8"/><text x="7.5" y="11" font-size="10" font-weight="bold" fill="#fff" text-anchor="middle" font-family="Liberation Sans">W</text><rect x="8" y="9" width="11" height="9" fill="#eee" stroke="#999" stroke-width="0.8"/><rect x="9.5" y="10.5" width="8" height="6" fill="#d96a1e"/></svg>
<div class="a" style="left:1658.3px;top:861.8px;width:1px;height:22px;background:#d0d0d0;box-shadow:1px 0 0 #fff"></div>
<svg class="a" style="left:1671.3px;top:862.8px" width="20" height="20" viewBox="0 0 20 20"><rect x="1.5" y="2.5" width="17" height="15" fill="#d8e6f8" stroke="#6a96d8" stroke-width="1"/><g stroke="#6a96d8" stroke-width="1"><path d="M1.5 7.5 H18.5 M1.5 12.5 H18.5 M7 2.5 V17.5 M12.8 2.5 V17.5"/></g></svg>
<svg class="a" style="left:1702.5px;top:862.8px" width="20" height="20" viewBox="0 0 20 20"><rect x="1.5" y="2.5" width="17" height="15" fill="#d8e6f8" stroke="#6a96d8" stroke-width="1"/><g stroke="#6a96d8" stroke-width="1"><path d="M1.5 7.5 H18.5 M1.5 12.5 H18.5 M7 2.5 V17.5 M12.8 2.5 V17.5"/></g><rect x="11" y="0.5" width="8" height="8" fill="#e03838"/><path d="M13 2.5 L17 6.5 M17 2.5 L13 6.5" stroke="#fff" stroke-width="1.4"/></svg>
<svg class="a" style="left:1731.5px;top:862.8px" width="20" height="20" viewBox="0 0 20 20"><text x="4" y="8" font-size="9" font-weight="bold" fill="#222" text-anchor="middle" font-family="Liberation Serif">T</text><rect x="6" y="8" width="12.5" height="10" fill="#d8e6f8" stroke="#6a96d8" stroke-width="1"/><path d="M6 11.5 H18.5 M6 14.8 H18.5 M10 8 V18 M14.3 8 V18" stroke="#6a96d8" stroke-width="0.9"/></svg>
<svg class="a" style="left:1762.6px;top:862.8px" width="20" height="20" viewBox="0 0 20 20"><rect x="2" y="7" width="16" height="11" fill="#d8e6f8" stroke="#4a80d0" stroke-width="1"/><rect x="2" y="10.5" width="16" height="3" fill="#3a78e0"/><path d="M6 14 V18 M10 7 V18 M14 7 V18" stroke="#4a80d0" stroke-width="0.9"/><path d="M10 0.5 L12.5 3.5 H7.5 Z" fill="#222"/><rect x="9.5" y="3" width="1" height="4" fill="#222"/></svg>
<svg class="a" style="left:1793.0px;top:862.8px" width="20" height="20" viewBox="0 0 20 20"><path d="M4 3 H1.5 V17 H4" fill="none" stroke="#333" stroke-width="1.1"/><rect x="2" y="8" width="11" height="4.5" fill="#e05a5a"/><rect x="13" y="9.6" width="3.5" height="1.2" fill="#333"/><path d="M16 7.8 L19.5 10.2 L16 12.6 Z" fill="#333"/></svg>
<svg class="a" style="left:1822.2px;top:862.8px" width="20" height="20" viewBox="0 0 20 20"><rect x="6" y="1.5" width="12.5" height="17" fill="#d8e6f8" stroke="#4a80d0" stroke-width="1"/><rect x="9" y="1.5" width="3" height="17" fill="#3a78e0"/><path d="M6 6 H18.5 M6 10 H18.5 M6 14 H18.5 M15 1.5 V18.5" stroke="#4a80d0" stroke-width="0.9"/><path d="M0.5 10 L3.5 7.5 V12.5 Z" fill="#333"/><rect x="3" y="9.5" width="3" height="1" fill="#333"/></svg>
<svg class="a" style="left:468.5px;top:895.3px" width="20" height="20" viewBox="0 0 20 20"><path d="M2 4 V8 H18 V4" fill="none" stroke="#333" stroke-width="1.3"/><rect x="8" y="5" width="4" height="10" fill="#e05050" stroke="#a03030" stroke-width="0.6"/><rect x="9.5" y="15" width="1" height="4" fill="#333"/><path d="M8 17 L10 19.5 L12 17 Z" fill="#333"/></svg>
<svg class="a" style="left:497.7px;top:895.3px" width="20" height="20" viewBox="0 0 20 20"><rect x="1" y="3" width="18" height="15" fill="#5a86cc" stroke="#3e68b0" stroke-width="0.8"/><rect x="4" y="6" width="12" height="11" fill="#7e9ae0"/><rect x="4" y="3.5" width="6" height="2" fill="#fff"/><rect x="11" y="3.5" width="5" height="2" fill="#fff"/><g fill="#fff"><rect x="1.8" y="4" width="1.5" height="1.5"/><rect x="1.8" y="8" width="1.5" height="1.5"/><rect x="1.8" y="12" width="1.5" height="1.5"/><rect x="1.8" y="15.5" width="1.5" height="1.5"/><rect x="16.7" y="4" width="1.5" height="1.5"/><rect x="16.7" y="8" width="1.5" height="1.5"/><rect x="16.7" y="12" width="1.5" height="1.5"/><rect x="16.7" y="15.5" width="1.5" height="1.5"/></g></svg>
<svg class="a" style="left:527.5px;top:895.3px" width="20" height="20" viewBox="0 0 20 20"><rect x="1" y="3" width="18" height="15" fill="#5a86cc" stroke="#3e68b0" stroke-width="0.8"/><rect x="4" y="6" width="12" height="9" fill="#8ab4ec"/><path d="M7 10.5 H12 M10 8 L13 10.5 L10 13" stroke="#fff" stroke-width="1.6" fill="none"/><rect x="4" y="15.5" width="12" height="1.5" fill="#fff"/><g fill="#fff"><rect x="1.8" y="4" width="1.5" height="1.5"/><rect x="1.8" y="8" width="1.5" height="1.5"/><rect x="1.8" y="12" width="1.5" height="1.5"/><rect x="1.8" y="15.5" width="1.5" height="1.5"/><rect x="16.7" y="4" width="1.5" height="1.5"/><rect x="16.7" y="8" width="1.5" height="1.5"/><rect x="16.7" y="12" width="1.5" height="1.5"/><rect x="16.7" y="15.5" width="1.5" height="1.5"/></g></svg>
<svg class="a" style="left:557.9px;top:895.3px" width="20" height="20" viewBox="0 0 20 20"><rect x="1" y="3" width="18" height="15" fill="#5a86cc" stroke="#3e68b0" stroke-width="0.8"/><rect x="4" y="6" width="12" height="11" fill="#8ab4ec"/><path d="M10 7 V14 M7 11 L10 14.5 L13 11" stroke="#fff" stroke-width="1.6" fill="none"/><rect x="4" y="3.5" width="12" height="1.5" fill="#fff"/><g fill="#fff"><rect x="1.8" y="4" width="1.5" height="1.5"/><rect x="1.8" y="8" width="1.5" height="1.5"/><rect x="1.8" y="12" width="1.5" height="1.5"/><rect x="1.8" y="15.5" width="1.5" height="1.5"/><rect x="16.7" y="4" width="1.5" height="1.5"/><rect x="16.7" y="8" width="1.5" height="1.5"/><rect x="16.7" y="12" width="1.5" height="1.5"/><rect x="16.7" y="15.5" width="1.5" height="1.5"/></g></svg>
<svg class="a" style="left:587.7px;top:895.3px" width="20" height="20" viewBox="0 0 20 20"><rect x="1" y="3" width="18" height="15" fill="#4a6ec8"/><g fill="#9ab4ec"><rect x="3" y="7" width="3" height="2.5"/><rect x="7" y="7" width="3" height="2.5"/><rect x="11" y="7" width="3" height="2.5"/><rect x="15" y="7" width="3" height="2.5"/><rect x="3" y="11" width="3" height="2.5"/><rect x="7" y="11" width="3" height="2.5"/><rect x="11" y="11" width="3" height="2.5"/><rect x="15" y="11" width="3" height="2.5"/><rect x="3" y="14.5" width="3" height="2.5"/><rect x="7" y="14.5" width="3" height="2.5"/><rect x="11" y="14.5" width="3" height="2.5"/><rect x="15" y="14.5" width="3" height="2.5"/></g><rect x="3" y="4" width="7" height="2" fill="#fff"/><rect x="11" y="4" width="7" height="2" fill="#fff"/></svg>
<svg class="a" style="left:617.5px;top:895.3px" width="20" height="20" viewBox="0 0 20 20"><rect x="1" y="3" width="18" height="15" fill="#5a86cc" stroke="#3e68b0" stroke-width="0.8"/><rect x="4" y="4" width="12" height="13" fill="#6a9ae0"/><path d="M4 8 H16 M4 12 H16" stroke="#3e68b0" stroke-width="1"/><g fill="#fff"><rect x="1.8" y="4" width="1.5" height="1.5"/><rect x="1.8" y="8" width="1.5" height="1.5"/><rect x="1.8" y="12" width="1.5" height="1.5"/><rect x="1.8" y="15.5" width="1.5" height="1.5"/><rect x="16.7" y="4" width="1.5" height="1.5"/><rect x="16.7" y="8" width="1.5" height="1.5"/><rect x="16.7" y="12" width="1.5" height="1.5"/><rect x="16.7" y="15.5" width="1.5" height="1.5"/></g></svg>
<svg class="a" style="left:647.9px;top:895.3px" width="20" height="20" viewBox="0 0 20 20"><rect x="1" y="3" width="18" height="15" fill="#5a86cc" stroke="#3e68b0" stroke-width="0.8"/><rect x="4" y="4" width="12" height="13" fill="#6a9ae0"/><path d="M8 4 V17 M12 4 V17" stroke="#3e68b0" stroke-width="1"/><g fill="#fff"><rect x="1.8" y="4" width="1.5" height="1.5"/><rect x="1.8" y="8" width="1.5" height="1.5"/><rect x="1.8" y="12" width="1.5" height="1.5"/><rect x="1.8" y="15.5" width="1.5" height="1.5"/><rect x="16.7" y="4" width="1.5" height="1.5"/><rect x="16.7" y="8" width="1.5" height="1.5"/><rect x="16.7" y="12" width="1.5" height="1.5"/><rect x="16.7" y="15.5" width="1.5" height="1.5"/></g></svg>
<svg class="a" style="left:677.0px;top:895.3px" width="20" height="20" viewBox="0 0 20 20"><path d="M4 2 H12 L16 6 V18 H4 Z" fill="#fafafa" stroke="#eee" stroke-width="0.8"/><rect x="9" y="12" width="2" height="6" fill="#f4d8c8"/><rect x="12" y="10" width="2" height="8" fill="#d8eed8"/><rect x="15" y="13" width="2" height="5" fill="#d8e8f4"/></svg>
<div class="a" style="left:706.1px;top:894.3px;width:1px;height:22px;background:#d0d0d0;box-shadow:1px 0 0 #fff"></div>
<svg class="a" style="left:719.1px;top:895.3px" width="20" height="20" viewBox="0 0 20 20"><rect x="5" y="2" width="10" height="6" fill="#eee" stroke="#aaa" stroke-width="0.8"/><rect x="1.5" y="7" width="17" height="9" rx="1.5" fill="#333"/><rect x="1.5" y="7" width="17" height="2.5" fill="#777"/><rect x="5" y="14" width="10" height="4.5" fill="#fff" stroke="#aaa" stroke-width="0.6"/><rect x="5.5" y="16" width="9" height="1.5" fill="#3b7be0"/></svg>
<svg class="a" style="left:748.9px;top:895.3px" width="20" height="20" viewBox="0 0 20 20"><rect x="1.5" y="1.5" width="12" height="14" fill="#e8eaee" stroke="#aaa" stroke-width="0.8"/><circle cx="8.5" cy="9" r="4.2" fill="#5ab0e0" stroke="#444" stroke-width="1.2"/><path d="M6.5 8 C7.5 6.5 9.5 7 10 9" stroke="#6cc040" stroke-width="1.3" fill="none"/><path d="M11.5 12 L17 17.5" stroke="#444" stroke-width="2.4"/></svg>
<svg class="a" style="left:778.8px;top:895.3px" width="20" height="20" viewBox="0 0 20 20"><rect x="2" y="2" width="5" height="3" fill="#333"/><rect x="13" y="2" width="5" height="3" fill="#333"/><path d="M1 8 L2.5 4.5 H7.5 L9 8 V17 H1 Z M11 8 L12.5 4.5 H17.5 L19 8 V17 H11 Z" fill="#2a2a2a"/><rect x="8" y="8" width="4" height="4" fill="#2a2a2a"/><rect x="2" y="9" width="6" height="3" fill="#555"/><rect x="12" y="9" width="6" height="3" fill="#555"/></svg>
<svg class="a" style="left:808.6px;top:895.3px" width="20" height="20" viewBox="0 0 20 20"><rect x="1.5" y="3" width="12" height="15" rx="1" fill="#b87a3c"/><rect x="4.5" y="1.5" width="6" height="3" rx="1" fill="#ddd" stroke="#888" stroke-width="0.6"/><path d="M7 8 H14 L18 12 V19 H7 Z" fill="#eef0f4" stroke="#aaa" stroke-width="0.8"/></svg>
<svg class="a" style="left:838.9px;top:895.3px" width="20" height="20" viewBox="0 0 20 20"><circle cx="10" cy="10" r="8.8" fill="#3a6ee8"/><circle cx="10" cy="8" r="7" fill="#6a9af0" opacity="0.5"/><text x="10" y="15" font-size="13" font-weight="bold" fill="#fff" text-anchor="middle" font-family="Liberation Sans">?</text></svg>
<!--/TB-->
<!--TOP-->
<svg class="a" style="left:312px;top:19px" width="21" height="19" viewBox="0 0 21 19"><rect x="1" y="1" width="19" height="2.6" fill="#262626"/><rect x="10" y="8.2" width="10" height="2.6" fill="#262626"/><rect x="1" y="15.4" width="19" height="2.6" fill="#262626"/><path d="M1.2 9.5 L7.5 6 V13 Z" fill="#262626"/></svg>
<svg class="a" style="left:383px;top:19px" width="19" height="19" viewBox="0 0 19 19"><path d="M15.2 11.5 A6.6 6.6 0 1 1 13.6 4.2" fill="none" stroke="#262626" stroke-width="2.4"/><path d="M18 1.2 V9 H10.4 Z" fill="#262626"/></svg>
<svg class="a" style="left:1611px;top:19px" width="23" height="19" viewBox="0 0 23 19"><path d="M2 11.5 C1 6 5.5 1.5 11 1.5 C16.5 1.5 20.5 5 20.8 8.8 C21 10.5 20.2 10.2 18.5 10 C16.5 9.8 14.5 10.5 12.5 12.5 C10.8 14.5 9.5 17.5 6.8 17.5 C4.5 17.5 2.6 15 2 11.5 Z" fill="none" stroke="#262626" stroke-width="1.5"/><circle cx="5.5" cy="12.8" r="1.6" fill="#262626"/><circle cx="5.8" cy="8" r="0.95" fill="#262626"/><circle cx="9.2" cy="5.2" r="0.95" fill="#262626"/><circle cx="13" cy="5.5" r="0.95" fill="#262626"/><circle cx="16.2" cy="8" r="0.95" fill="#262626"/></svg>
<svg class="a" style="left:1681px;top:18px" width="22" height="21" viewBox="0 0 22 21"><path d="M2 2.5 Q1.6 1 3 1 H9.6 L19.6 10.2 Q20.4 11 19.6 11.8 L12.6 19.2 Q11.8 20 11 19.2 L1.6 9.6 Z" fill="none" stroke="#262626" stroke-width="1.5" stroke-linejoin="round"/><circle cx="7" cy="6" r="1.7" fill="none" stroke="#262626" stroke-width="1.3"/></svg>
<svg class="a" style="left:1754px;top:19px" width="17" height="18" viewBox="0 0 17 18"><g fill="none" stroke="#262626" stroke-width="1.5"><path d="M1 6 V1 H6 M1 1 L5.8 5.8"/><path d="M11 1 H16 V6 M16 1 L11.2 5.8"/><path d="M1 12 V17 H6 M1 17 L5.8 12.2"/><path d="M16 12 V17 H11 M16 17 L11.2 12.2"/></g></svg>
<div class="a" style="left:1822px;top:15px;font-size:18px;line-height:25px;color:#222">admin</div>
<div class="a caret" style="left:1877px;top:25px;border-left-width:7px;border-right-width:7px;border-top:7px solid #666"></div>
<div class="a" style="left:344.0px;top:60px;width:1px;height:50px;background:#f0f1f5"></div>
<div class="a" style="left:489.2px;top:60px;width:1px;height:50px;background:#f0f1f5"></div>
<div class="a" style="left:629.0px;top:60px;width:1px;height:50px;background:#f0f1f5"></div>
<div class="a" style="left:768.7px;top:60px;width:1px;height:50px;background:#f0f1f5"></div>
<div class="a" style="left:908.4px;top:60px;width:1px;height:50px;background:#f0f1f5"></div>
<div class="a" style="left:1048.0px;top:60px;width:1px;height:50px;background:#f0f1f5"></div>
<div class="a" style="left:1187.7px;top:60px;width:1px;height:50px;background:#f0f1f5"></div>
<div class="a" style="left:1327.4px;top:60px;width:1px;height:50px;background:#f0f1f5"></div>
<div class="a" style="left:1467.5px;top:60px;width:1px;height:50px;background:#f0f1f5"></div>
<div class="a" style="left:1607.5px;top:60px;width:1px;height:50px;background:#f0f1f5"></div>
<div class="a" style="left:1729.9px;top:60px;width:1px;height:50px;background:#f0f1f5"></div>
<div class="a" style="left:1820.2px;top:60px;width:1px;height:50px;background:#f0f1f5"></div>
<div class="a" style="left:1870.0px;top:60px;width:1px;height:50px;background:#f0f1f5"></div>
<svg class="a" style="left:309px;top:75px" width="19" height="19" viewBox="0 0 19 19"><path d="M9 1 L1.5 9.5 L9 18 M17.5 1 L10 9.5 L17.5 18" fill="none" stroke="#5a5a5a" stroke-width="1.9"/></svg>
<div class="a tabt" style="left:369.0px;top:73px;">提币列表</div>
<svg class="a" style="left:463.2px;top:80px" width="11" height="11" viewBox="0 0 11 11"><path d="M0.8 0.8 L10.2 10.2 M10.2 0.8 L0.8 10.2" stroke="#b4b4b4" stroke-width="1.1"/></svg>
<div class="a tabt" style="left:509.2px;top:73px;">钱包管理</div>
<svg class="a" style="left:603.0px;top:80px" width="11" height="11" viewBox="0 0 11 11"><path d="M0.8 0.8 L10.2 10.2 M10.2 0.8 L0.8 10.2" stroke="#b4b4b4" stroke-width="1.1"/></svg>
<div class="a tabt" style="left:649.0px;top:73px;">充币申请</div>
<svg class="a" style="left:742.7px;top:80px" width="11" height="11" viewBox="0 0 11 11"><path d="M0.8 0.8 L10.2 10.2 M10.2 0.8 L0.8 10.2" stroke="#b4b4b4" stroke-width="1.1"/></svg>
<div class="a tabt" style="left:788.7px;top:73px;">通道充值</div>
<svg class="a" style="left:882.4px;top:80px" width="11" height="11" viewBox="0 0 11 11"><path d="M0.8 0.8 L10.2 10.2 M10.2 0.8 L0.8 10.2" stroke="#b4b4b4" stroke-width="1.1"/></svg>
<div class="a tabt" style="left:928.4px;top:73px;">后台用户</div>
<svg class="a" style="left:1022.0px;top:80px" width="11" height="11" viewBox="0 0 11 11"><path d="M0.8 0.8 L10.2 10.2 M10.2 0.8 L0.8 10.2" stroke="#b4b4b4" stroke-width="1.1"/></svg>
<div class="a tabt" style="left:1068.0px;top:73px;">新闻查看</div>
<svg class="a" style="left:1161.7px;top:80px" width="11" height="11" viewBox="0 0 11 11"><path d="M0.8 0.8 L10.2 10.2 M10.2 0.8 L0.8 10.2" stroke="#b4b4b4" stroke-width="1.1"/></svg>
<div class="a tabt" style="left:1207.7px;top:73px;">分类管理</div>
<svg class="a" style="left:1301.4px;top:80px" width="11" height="11" viewBox="0 0 11 11"><path d="M0.8 0.8 L10.2 10.2 M10.2 0.8 L0.8 10.2" stroke="#b4b4b4" stroke-width="1.1"/></svg>
<div class="a tabt" style="left:1347.4px;top:73px;">建议列表</div>
<svg class="a" style="left:1441.5px;top:80px" width="11" height="11" viewBox="0 0 11 11"><path d="M0.8 0.8 L10.2 10.2 M10.2 0.8 L0.8 10.2" stroke="#b4b4b4" stroke-width="1.1"/></svg>
<div class="a tabt" style="left:1487.5px;top:73px;">币种查看</div>
<svg class="a" style="left:1581.5px;top:80px" width="11" height="11" viewBox="0 0 11 11"><path d="M0.8 0.8 L10.2 10.2 M10.2 0.8 L0.8 10.2" stroke="#b4b4b4" stroke-width="1.1"/></svg>
<div class="a tabt" style="left:1627.5px;top:73px;">机器人</div>
<svg class="a" style="left:1703.9px;top:80px" width="11" height="11" viewBox="0 0 11 11"><path d="M0.8 0.8 L10.2 10.2 M10.2 0.8 L0.8 10.2" stroke="#b4b4b4" stroke-width="1.1"/></svg>
<div class="a tabt" style="left:1749.9px;top:73px;width:70px;overflow:hidden;">币种分类</div>
<svg class="a" style="left:1836px;top:75px" width="19" height="19" viewBox="0 0 19 19"><path d="M1.5 1 L9 9.5 L1.5 18 M10 1 L17.5 9.5 L10 18" fill="none" stroke="#5a5a5a" stroke-width="1.9"/></svg>
<svg class="a" style="left:1886px;top:78px" width="19" height="12" viewBox="0 0 19 12"><path d="M1 1.5 L9.5 10.5 L18 1.5" fill="none" stroke="#5a5a5a" stroke-width="1.6"/></svg>
<div class="a" style="left:1816px;top:155px;width:18px;height:3px;background:#23232f"></div>
<svg class="a" style="left:1848px;top:146px" width="20" height="20" viewBox="0 0 20 20"><g fill="none" stroke="#555" stroke-width="1.6"><path d="M1.5 13 V1.5 H18.5 V18.5 H7"/><rect x="1.5" y="13" width="5.5" height="5.5"/><path d="M10 10 L16 4 M11.5 4 H16 V8.5"/></g></svg>
<svg class="a" style="left:1882px;top:148px" width="16" height="16" viewBox="0 0 16 16"><path d="M1 1 L15 15 M15 1 L1 15" stroke="#333" stroke-width="1.9"/></svg>
<div class="a" style="left:1903.5px;top:190px;width:0;height:0;border-left:6.5px solid transparent;border-right:6.5px solid transparent;border-bottom:7px solid #8a8a8a"></div>
<div class="a" style="left:1905px;top:205px;width:11px;height:412px;border-radius:6px;background:#8b8b8b"></div>
<div class="a" style="left:1903.5px;top:914px;width:0;height:0;border-left:6.5px solid transparent;border-right:6.5px solid transparent;border-top:7px solid #8a8a8a"></div>
<!--/TOP-->
<!--WM-->
<svg class="a" style="left:0;top:0;pointer-events:none" width="1920" height="920" viewBox="0 0 1920 920"><defs><filter id="emb" x="0" y="0" width="1920" height="920" filterUnits="userSpaceOnUse"><feOffset in="SourceAlpha" dx="-0.6" dy="1.3" result="off"/><feComposite in="off" in2="SourceAlpha" operator="out" result="edge"/><feGaussianBlur in="edge" stdDeviation="0.35" result="b"/><feFlood flood-color="#000" flood-opacity="0.24" result="fl"/><feComposite in="fl" in2="b" operator="in" result="dark"/><feOffset in="SourceAlpha" dx="0.6" dy="-1" result="off2"/><feComposite in="off2" in2="SourceAlpha" operator="out" result="edge2"/><feGaussianBlur in="edge2" stdDeviation="0.35" result="b2"/><feFlood flood-color="#000" flood-opacity="0.07" result="fl2"/><feComposite in="fl2" in2="b2" operator="in" result="light"/><feFlood flood-color="#fff" flood-opacity="0.25" result="fl3"/><feComposite in="fl3" in2="SourceAlpha" operator="in" result="fill"/><feMerge><feMergeNode in="fill"/><feMergeNode in="light"/><feMergeNode in="dark"/></feMerge></filter></defs><g filter="url(#emb)" font-family="Liberation Sans" font-size="51" fill="#000" stroke="#000" stroke-width="1"><text x="0" y="45" transform="translate(21 6) rotate(24.5)">7w7s.com</text><text x="0" y="45" transform="translate(751 6) rotate(24.5)">7w7s.com</text><text x="0" y="45" transform="translate(1481 6) rotate(24.5)">7w7s.com</text><text x="0" y="45" transform="translate(21 356) rotate(24.5)">7w7s.com</text><text x="0" y="45" transform="translate(751 356) rotate(24.5)">7w7s.com</text><text x="0" y="45" transform="translate(1481 356) rotate(24.5)">7w7s.com</text><text x="0" y="45" transform="translate(21 706) rotate(24.5)">7w7s.com</text><text x="0" y="45" transform="translate(751 706) rotate(24.5)">7w7s.com</text><text x="0" y="45" transform="translate(1481 706) rotate(24.5)">7w7s.com</text></g></svg>
<!--/WM-->
</body></html>
